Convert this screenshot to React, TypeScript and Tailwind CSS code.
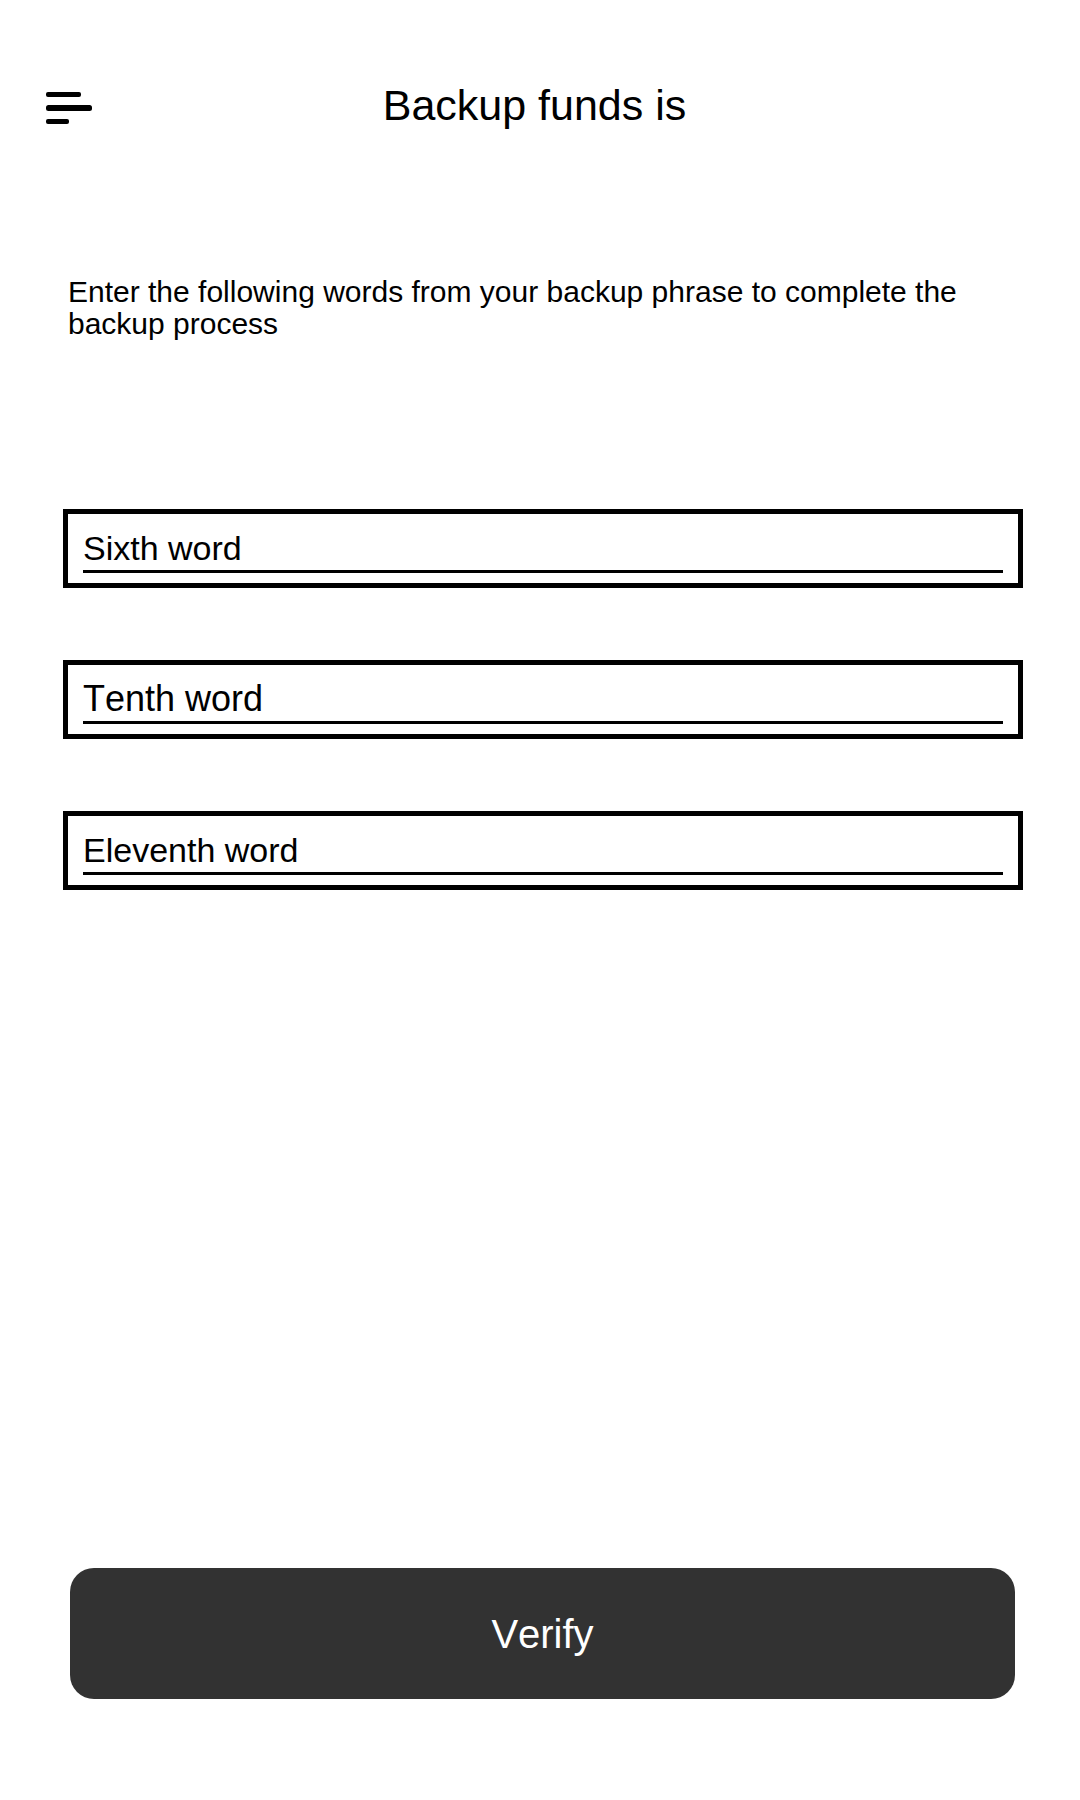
import { useState } from "react";

const fields = [
  { id: "word-6", label: "Sixth word", size: "text-[34px]" },
  { id: "word-10", label: "Tenth word", size: "text-[36px]" },
  { id: "word-11", label: "Eleventh word", size: "text-[34px]" },
];

function MenuIcon() {
  return (
    <svg width="46" height="32" viewBox="0 0 46 32" fill="black" aria-hidden="true">
      <rect x="0" y="0" width="35" height="5" rx="2" />
      <rect x="0" y="13" width="46" height="6" rx="2.5" />
      <rect x="0" y="27" width="23" height="5" rx="2" />
    </svg>
  );
}

function WordField({ id, label, size }: { id: string; label: string; size: string }) {
  const [value, setValue] = useState("");
  return (
    <div className="h-[79px] border-5 border-black px-[15px] pt-3">
      <input
        id={id}
        type="text"
        aria-label={label}
        value={value}
        placeholder={label}
        onChange={(e) => setValue(e.target.value)}
        className={`block h-[47px] w-full border-b-3 border-black bg-transparent text-black outline-none placeholder:text-black placeholder:opacity-100 ${size}`}
      />
    </div>
  );
}

export default function App() {
  return (
    <main className="flex min-h-screen flex-col bg-white pb-[101px] font-['Liberation_Sans',Arial,sans-serif] text-black [font-kerning:none]">
      <header className="grid grid-cols-[1fr_auto_1fr] items-center pt-20 pr-[57px] pl-[46px]">
        <button type="button" aria-label="Open menu" className="justify-self-start pt-1.5">
          <MenuIcon />
        </button>
        <h1 className="text-[43px] leading-[50px]">Backup funds is</h1>
      </header>

      <p className="mt-[146px] mr-[65px] ml-[68px] text-[30px] leading-8">
        Enter the following words from your backup phrase to complete the backup process
      </p>

      <form className="mt-[169px] flex grow flex-col">
        <div className="flex flex-col gap-[72px] pr-[57px] pl-[63px]">
          {fields.map((field) => (
            <WordField key={field.id} {...field} />
          ))}
        </div>
        <div className="mt-auto pt-16 pr-[65px] pl-[70px]">
          <button
            type="button"
            className="block h-[131px] w-full rounded-3xl bg-[#323232] text-[40px] text-white"
          >
            Verify
          </button>
        </div>
      </form>
    </main>
  );
}
